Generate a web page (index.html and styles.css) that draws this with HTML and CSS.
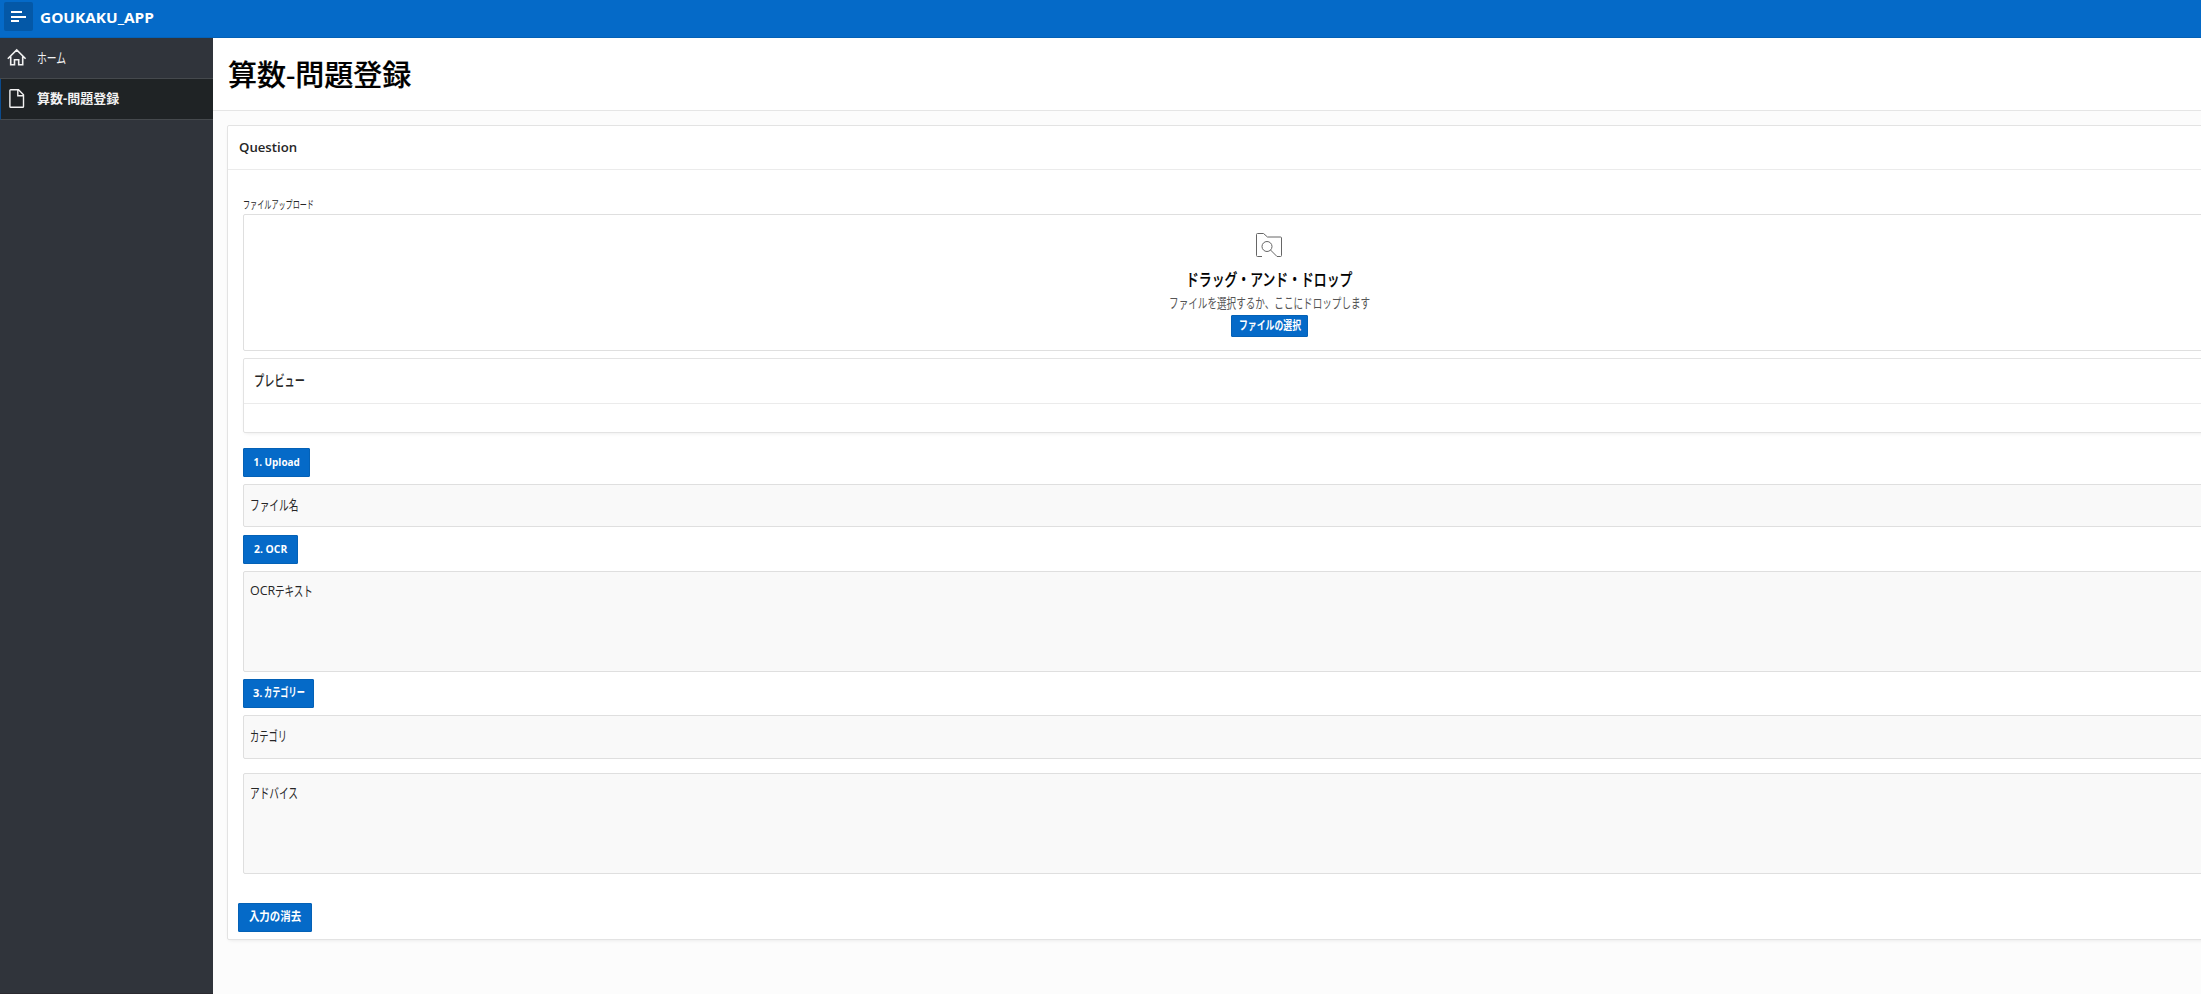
FILE: index.html
```html
<!DOCTYPE html>
<html lang="ja">
<head>
<meta charset="utf-8">
<title>算数-問題登録</title>
<link rel="stylesheet" href="styles.css">
</head>
<body>
<header class="header">
  <button class="nav-toggle" aria-label="menu"><svg width="29" height="29" viewBox="0 0 29 29"><path d="M7 9h11v2H7zM7 14h15v2H7zM7 18h8v2H7z" fill="#fff"/></svg></button>
  <span class="brand"><span class="t t-brand">GOUKAKU_APP</span></span>
</header>
<div class="body">
  <nav class="side">
    <a class="nav-item"><svg width="20" height="20" viewBox="0 0 20 20" fill="none" stroke="#f2f2f2" stroke-width="1.6"><path d="M.8 10.800 9.700 2l8.900 8.800M3.700 8.500V16.700h3.800V11.700h4.200V16.700h4V8.500"/></svg><span class="t t-home">ホーム</span></a>
    <a class="nav-item current"><svg width="20" height="20" viewBox="0 0 20 20" fill="none" stroke="#f2f2f2" stroke-width="1.4"><path d="M3.700.7h7.800l5 5v11.700q0 .8-.8.8H3.700q-.8 0-.8-.8V1.500Q2.900.7 3.700.7zM10.800.7v6h5.700"/></svg><span class="t t-nav2">算数-問題登録</span></a>
  </nav>
  <main class="main">
    <div class="title-bar"><h1 class="t t-title">算数-問題登録</h1></div>
    <section class="region">
      <h2 class="region-head"><span class="t t-question">Question</span></h2>
      <div class="form">
        <div class="upload-label"><span class="t t-label">ファイルアップロード</span></div>
        <div class="dropzone">
          <svg class="drop-icon" width="28" height="28" viewBox="0 0 28 28" fill="none" stroke="#666"><path d="M7 25.500H2.500q-1 0-1-1v-21q0-1 1-1H8.500l4 3.500H25.500q1 0 1 1V24.500q0 1-1 1H22L15.500 19"/><circle cx="12" cy="15.500" r="5"/></svg>
          <div class="drop-title"><span class="t t-drop">ドラッグ・アンド・ドロップ</span></div>
          <div class="drop-desc"><span class="t t-desc">ファイルを選択するか、ここにドロップします</span></div>
          <button class="btn btn-choose"><span class="t t-choose">ファイルの選択</span></button>
        </div>
        <div class="preview"><h3 class="preview-head"><span class="t t-preview">プレビュー</span></h3></div>
        <button class="btn btn-upload"><span class="t t-upload">1. Upload</span></button>
        <div class="field"><span class="t t-file">ファイル名</span></div>
        <button class="btn btn-ocr"><span class="t t-ocr">2. OCR</span></button>
        <div class="field area ocr-area"><span class="t t-ocrlabel">OCR</span><span class="t t-text">テキスト</span></div>
        <button class="btn btn-cat"><span class="t">3.</span><span class="t t-cat">カテゴリー</span></button>
        <div class="field field-cat"><span class="t t-category">カテゴリ</span></div>
        <div class="field area last"><span class="t t-advice">アドバイス</span></div>
      </div>
      <button class="btn btn-clear"><span class="t t-clear">入力の消去</span></button>
    </section>
  </main>
</div>
</body>
</html>
```
FILE: styles.css
```css
* { box-sizing: border-box; }
html { overflow: hidden; }
body {
  margin: 0;
  height: 994px;
  overflow: hidden;
  background: #fcfcfc;
  color: #262626;
  font-family: "Open Sans", "Noto Sans CJK JP", sans-serif;
  font-size: 12px;
}
h1, h2, h3 { margin: 0; font-weight: 600; }
button { font-family: inherit; padding: 0; }
.t { display: inline-block; white-space: nowrap; transform-origin: left center; line-height: 20px; }
.header {
  display: flex;
  height: 38px;
  padding: 2px 4px;
  gap: 7px;
  background: #056ac8;
  border-bottom: 1px solid #0461b6;
}
.nav-toggle { width: 29px; height: 29px; border: 0; border-radius: 2px; background: #0458a7; }
.nav-toggle svg { display: block; }
.brand { color: #fff; padding-top: 5px; }
.t-brand { font-size: 15px; font-weight: 700; transform: scaleX(1.025); }
.body { display: flex; height: 956px; }
.side { flex: none; width: 213px; background: #30343b; border-bottom: 1px solid #2b2a30; }
.nav-item {
  display: flex;
  align-items: center;
  height: 41px;
  padding: 0 0 1px 7px;
  gap: 10px;
  color: #f2f2f2;
  border-bottom: 1px solid #45494d;
}
.nav-item.current { background: #1f2325; padding-left: 6px; border-left: 1px solid #0a4a8c; font-weight: 700; }
.t-home { font-size: 14px; transform: scaleX(.7); }
.t-nav2 { font-size: 13px; margin-top: -2px; }
.main { flex: 1; min-width: 0; overflow: hidden; }
.title-bar { height: 73px; padding: 18px 15px 0; background: #fff; border-bottom: 1px solid #e5e5e5; }
.t-title { font-size: 29px; line-height: 38px; color: #000; font-weight: 500; -webkit-text-stroke: .2px #000; }
.region {
  width: 2085px;
  height: 815px;
  margin: 14px 0 0 14px;
  background: #fff;
  border: 1px solid #e3e3e3;
  border-radius: 2px;
  box-shadow: 0 2px 4px -2px rgba(0, 0, 0, .1);
}
.region-head { height: 44px; padding: 11px; border-bottom: 1px solid #ebebeb; font-size: 13.2px; line-height: 20px; }
.form { display: flex; flex-direction: column; align-items: flex-start; padding: 0 15px; height: 733px; }
.upload-label { height: 44px; padding-top: 25px; }
.t-label { font-size: 11px; transform: scaleX(.645); }
.dropzone {
  display: flex;
  flex-direction: column;
  align-items: center;
  flex: none;
  width: 2053px;
  height: 137px;
  padding-top: 16px;
  border: 1px solid #dfdfdf;
  border-radius: 2px;
}
.drop-icon { display: block; flex: none; margin-right: 1px; }
.drop-title { height: 27px; padding-top: 11px; color: #000; }
.drop-desc { height: 29px; padding-top: 7px; color: #555; }
.dropzone .t { transform-origin: center; }
.dropzone .t-drop { font-size: 17px; font-weight: 500; transform: scaleX(.755); -webkit-text-stroke: .2px #000; }
.dropzone .t-desc { font-size: 13.500px; transform: scaleX(.71); }
.preview { flex: none; width: 2053px; height: 75px; margin-top: 7px; border: 1px solid #e3e3e3; border-radius: 2px; box-shadow: 0 2px 4px -2px rgba(0, 0, 0, .1); }
.preview-head { height: 45px; padding: 11px 10px; border-bottom: 1px solid #ebebeb; font-size: 15px; line-height: 20px; font-weight: 500; }
.t-preview { transform: scaleX(.68); }
.btn {
  display: flex;
  justify-content: center;
  align-items: center;
  flex: none;
  height: 29px;
  padding-bottom: 2px;
  border: 1px solid #0461b6;
  border-radius: 1px;
  background: #056ac8;
  color: #fff;
  font-size: 11px;
  font-weight: 700;
}
.btn .t { transform-origin: center; }
.btn-choose { width: 77px; height: 22px; padding-bottom: 0; }
.dropzone .t-choose { font-size: 12px; transform: scaleX(.74); }
.btn-upload { width: 67px; margin-top: 15px; }
.t-upload { transform: scaleX(.9); }
.btn-ocr { width: 55px; margin-top: 8px; }
.t-ocr { transform: scaleX(.94); }
.btn-cat { width: 71px; margin-top: 7px; padding-left: 9px; justify-content: flex-start; gap: 2px; }
.btn .t-cat { font-size: 12px; transform: scaleX(.68); transform-origin: left center; }
.btn-clear { width: 74px; margin: 0 0 0 10px; }
.t-clear { font-size: 12px; transform: scaleX(.87); }
.field {
  flex: none;
  width: 2053px;
  height: 43px;
  margin-top: 7px;
  padding: 10px 6px;
  background: #f9f9f9;
  border: 1px solid #dfdfdf;
  border-radius: 2px;
  font-size: 14px;
}
.field-cat { height: 44px; }
.area { height: 101px; padding-top: 9px; }
.last { margin-top: 14px; }
.ocr-area { display: flex; }
.t-ocrlabel { font-size: 12.500px; }
.t-file { transform: scaleX(.69); }
.t-text { transform: scaleX(.68); }
.t-category { transform: scaleX(.66); }
.t-advice { transform: scaleX(.69); }
```
